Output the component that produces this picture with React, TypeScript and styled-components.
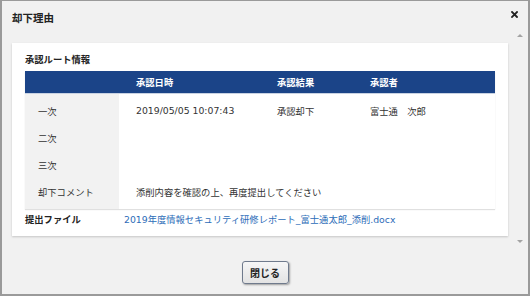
import React from "react";
import styled, { createGlobalStyle } from "styled-components";

const GlobalStyle = createGlobalStyle`
  html, body { margin: 0; padding: 0; }
  body {
    font-family: "DejaVu Sans", "Noto Sans CJK JP", sans-serif;
    color: #333;
    background: #fff;
  }
`;

const Window = styled.div`
  box-sizing: border-box;
  width: 530px;
  height: 296px;
  border: 2px solid #9a9a9a;
  border-top-width: 1px;
  background: #f1f1f1;
  display: flex;
  flex-direction: column;
`;

const TitleBar = styled.div`
  height: 29px;
  flex: none;
  display: flex;
  align-items: center;
  padding: 0 10px 0 10px;
`;

const Title = styled.div`
  font-size: 10.5px;
  font-weight: 700;
  color: #222;
  padding-top: 3px;
`;

const CloseButton = styled.button`
  margin-left: auto;
  margin-bottom: 2px;
  border: 0;
  background: transparent;
  padding: 0;
  width: 7px;
  height: 7px;
  display: flex;
  cursor: pointer;
`;

const Body = styled.div`
  height: 217px;
  flex: none;
  display: flex;
`;

const Scroller = styled.div`
  flex: 1;
  padding: 13px 3px 0 10px;
  min-width: 0;
`;

const ScrollBar = styled.div`
  width: 17px;
  flex: none;
  display: flex;
  flex-direction: column;
  align-items: center;
  justify-content: space-between;
  padding: 4px 0;
  box-sizing: border-box;
`;

const Arrow = styled.div<{ $down?: boolean }>`
  width: 0;
  height: 0;
  border-left: 3px solid transparent;
  border-right: 3px solid transparent;
  ${(p) =>
    p.$down
      ? "border-top: 3px solid #a3a3a3;"
      : "border-bottom: 3px solid #a3a3a3;"}
`;

const Panel = styled.div`
  background: #fff;
  padding: 10px 13px 7px 13px;
  box-shadow: 0 1px 2px rgba(0, 0, 0, 0.18);
`;

const SectionTitle = styled.div`
  font-size: 9.3px;
  font-weight: 700;
  line-height: 14px;
  color: #222;
  margin-bottom: 4px;
`;

const Table = styled.div`
  display: grid;
  grid-template-columns: 94px 141px 93px 1fr;
  box-shadow: 0 1px 1px rgba(0, 0, 0, 0.12);
`;

const HeadCell = styled.div`
  background: #1b4488;
  color: #fff;
  font-size: 9.3px;
  font-weight: 700;
  height: 23px;
  display: flex;
  align-items: center;
  padding-left: 17px;
  border-bottom: 1px solid #c8d2e2;
  box-sizing: border-box;
`;

const Cell = styled.div<{ $label?: boolean; $first?: boolean; $last?: boolean }>`
  font-size: 9.3px;
  display: flex;
  align-items: center;
  height: 27px;
  box-sizing: content-box;
  padding-left: ${(p) => (p.$label ? "13px" : "17px")};
  padding-top: ${(p) => (p.$first ? "3px" : "0")};
  padding-bottom: ${(p) => (p.$last ? "4px" : "0")};
  background: ${(p) => (p.$label ? "#f2f2f2" : "#fff")};
  color: #333;
  white-space: nowrap;
`;

const CommentCell = styled(Cell)`
  grid-column: 2 / span 3;
`;

const FileRow = styled.div`
  display: flex;
  align-items: center;
  height: 20px;
  font-size: 9.3px;
`;

const FileLabel = styled.div`
  width: 99px;
  font-weight: 700;
  color: #222;
`;

const FileLink = styled.a`
  color: #2c6cb8;
  text-decoration: none;
  white-space: nowrap;
`;

const Footer = styled.div`
  flex: 1;
  display: flex;
  justify-content: center;
  align-items: flex-start;
  padding-top: 14px;
`;

const Button = styled.button`
  width: 47px;
  height: 23px;
  box-sizing: border-box;
  border: 1px solid #6f7a8c;
  border-radius: 3px;
  background: linear-gradient(#f6f6f6, #e3e3e3);
  box-shadow: 1px 1px 2px rgba(0, 0, 0, 0.35);
  font-family: "DejaVu Sans", "Noto Sans CJK JP", sans-serif;
  font-size: 10px;
  font-weight: 700;
  color: #222;
  padding: 0;
  cursor: pointer;
`;

const rows = [
  { label: "一次", date: "2019/05/05 10:07:43", result: "承認却下", who: "富士通　次郎" },
  { label: "二次", date: "", result: "", who: "" },
  { label: "三次", date: "", result: "", who: "" },
];

export default function App() {
  return (
    <>
      <GlobalStyle />
      <Window>
        <TitleBar>
          <Title>却下理由</Title>
          <CloseButton aria-label="close">
            <svg width="7" height="7" viewBox="0 0 7 7">
              <path d="M1 1 L6 6 M6 1 L1 6" stroke="#222" strokeWidth="1.8" strokeLinecap="square" />
            </svg>
          </CloseButton>
        </TitleBar>
        <Body>
          <Scroller>
            <Panel>
              <SectionTitle>承認ルート情報</SectionTitle>
              <Table>
                <HeadCell />
                <HeadCell>承認日時</HeadCell>
                <HeadCell>承認結果</HeadCell>
                <HeadCell>承認者</HeadCell>
                {rows.map((r, i) => (
                  <React.Fragment key={r.label}>
                    <Cell $label $first={i === 0}>{r.label}</Cell>
                    <Cell $first={i === 0}>{r.date}</Cell>
                    <Cell $first={i === 0}>{r.result}</Cell>
                    <Cell $first={i === 0}>{r.who}</Cell>
                  </React.Fragment>
                ))}
                <Cell $label $last>却下コメント</Cell>
                <CommentCell $last>添削内容を確認の上、再度提出してください</CommentCell>
              </Table>
              <FileRow>
                <FileLabel>提出ファイル</FileLabel>
                <FileLink href="#">2019年度情報セキュリティ研修レポート_富士通太郎_添削.docx</FileLink>
              </FileRow>
            </Panel>
          </Scroller>
          <ScrollBar>
            <Arrow />
            <Arrow $down />
          </ScrollBar>
        </Body>
        <Footer>
          <Button>閉じる</Button>
        </Footer>
      </Window>
    </>
  );
}
